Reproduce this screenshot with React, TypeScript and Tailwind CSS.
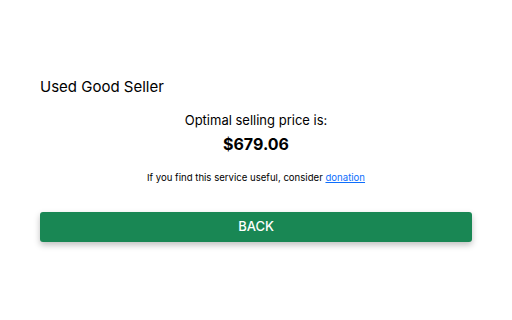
export default function App() {
  return (
    <div
      className="h-[320px] w-[512px] bg-white px-10 pt-[77px] text-black"
      style={{ fontFamily: "Inter, 'Liberation Sans', sans-serif" }}
    >
      <h1 className="text-[15px] leading-5">Used Good Seller</h1>
      <div className="mt-[13px] flex flex-col items-center">
        <p className="text-[13px] leading-5">Optimal selling price is:</p>
        <p className="mt-[2px] text-[16px] font-bold leading-6">$679.06</p>
        <p className="mt-[14px] text-[9.6px] leading-4">
          If you find this service useful, consider{" "}
          <a href="#" className="text-[#0d6efd] underline">
            donation
          </a>
        </p>
      </div>
      <button
        type="button"
        className="mt-[26px] h-[30px] w-full rounded-[3px] bg-[#198754] text-[13px] font-medium text-white shadow-[0_3px_6px_rgba(0,0,0,0.25)]"
      >
        BACK
      </button>
    </div>
  );
}
